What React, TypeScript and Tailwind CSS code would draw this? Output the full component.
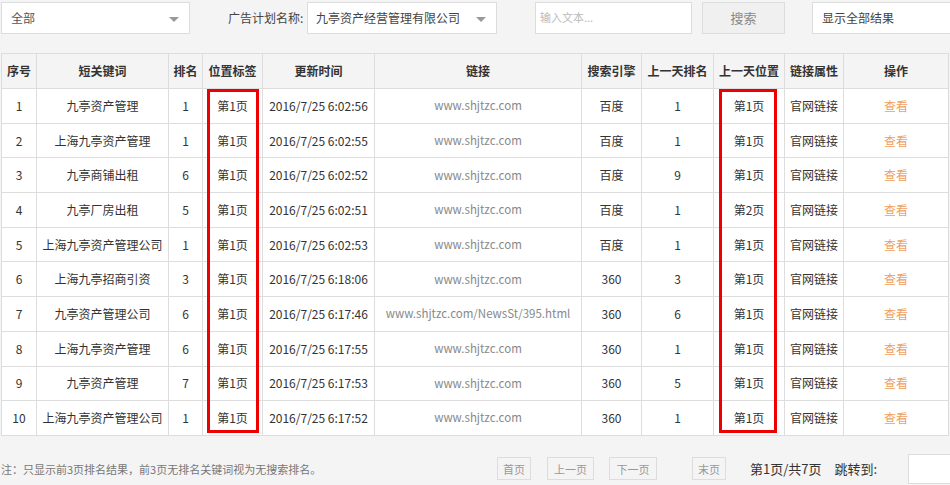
import React from "react";

const rows = [
  ["1","九亭资产管理","1","第1页","2016/7/25 6:02:56","www.shjtzc.com","百度","1","第1页"],
  ["2","上海九亭资产管理","1","第1页","2016/7/25 6:02:55","www.shjtzc.com","百度","1","第1页"],
  ["3","九亭商铺出租","6","第1页","2016/7/25 6:02:52","www.shjtzc.com","百度","9","第1页"],
  ["4","九亭厂房出租","5","第1页","2016/7/25 6:02:51","www.shjtzc.com","百度","1","第2页"],
  ["5","上海九亭资产管理公司","1","第1页","2016/7/25 6:02:53","www.shjtzc.com","百度","1","第1页"],
  ["6","上海九亭招商引资","3","第1页","2016/7/25 6:18:06","www.shjtzc.com","360","3","第1页"],
  ["7","九亭资产管理公司","6","第1页","2016/7/25 6:17:46","www.shjtzc.com/NewsSt/395.html","360","6","第1页"],
  ["8","上海九亭资产管理","6","第1页","2016/7/25 6:17:55","www.shjtzc.com","360","1","第1页"],
  ["9","九亭资产管理","7","第1页","2016/7/25 6:17:53","www.shjtzc.com","360","5","第1页"],
  ["10","上海九亭资产管理公司","1","第1页","2016/7/25 6:17:52","www.shjtzc.com","360","1","第1页"],
];
const widths = [35, 132, 34, 60, 112, 207, 60, 72, 71, 59, 105];
const heads = ["序号","短关键词","排名","位置标签","更新时间","链接","搜索引擎","上一天排名","上一天位置","链接属性","操作"];

const Caret = () => (
  <span className="absolute right-[10px] top-[14px] w-0 h-0 border-l-[5px] border-r-[5px] border-t-[5px] border-l-transparent border-r-transparent border-t-[#999]" />
);

export default function App() {
  return (
    <div className="w-[950px] h-[485px] bg-[#f4f4f4] overflow-hidden relative text-[12px] text-[#333]" style={{ fontFamily: '"Noto Sans CJK SC", "Noto Sans", sans-serif' }}>
      <div className="flex items-center h-[34px] pt-[1px] whitespace-nowrap">
        <div className="relative shrink-0 ml-[1px] w-[189px] h-[32px] bg-white border border-[#ddd] flex items-center pl-[9px] text-[#555]">全部<Caret /></div>
        <div className="shrink-0 ml-[38px] w-[79px] text-[#444]">广告计划名称:</div>
        <div className="relative shrink-0 w-[190px] h-[32px] bg-white border border-[#ddd] flex items-center pl-[8px] text-[#444]">九亭资产经营管理有限公司<Caret /></div>
        <div className="shrink-0 ml-[38px] w-[157px] h-[32px] bg-white border border-[#ddd] flex items-center pl-[4px] text-[#bbb] text-[11px]">输入文本...</div>
        <div className="shrink-0 ml-[10px] w-[83px] h-[32px] bg-[#f0f0f0] border border-[#ddd] flex items-center justify-center text-[#888] text-[13px]">搜索</div>
        <div className="shrink-0 ml-[27px] w-[150px] h-[32px] bg-white border border-[#ddd] flex items-center pl-[9px] text-[#444]">显示全部结果</div>
      </div>
      <table className="mt-[19px] ml-[1px] border-collapse table-fixed bg-white" style={{ width: 947 }}>
        <colgroup>{widths.map((w, i) => <col key={i} style={{ width: w }} />)}</colgroup>
        <thead>
          <tr className="h-[35px] bg-[#f4f4f4]">
            {heads.map((h) => <th key={h} className="border border-[#ddd] font-bold text-[12px] text-[#333]">{h}</th>)}
          </tr>
        </thead>
        <tbody>
          {rows.map((r) => (
            <tr key={r[0]} className="h-[34.7px]">
              {r.map((c, i) => (
                <td key={i} className={`border border-[#ddd] text-center whitespace-nowrap ${i === 5 ? "text-[#888] text-[11.5px]" : ""}`}>{c}</td>
              ))}
              <td className="border border-[#ddd] text-center">官网链接</td>
              <td className="border border-[#ddd] text-center text-[#f0a060]">查看</td>
            </tr>
          ))}
        </tbody>
      </table>
      <div className="absolute left-[207px] top-[89px] w-[52px] h-[344px] border-[3px] border-[#e00]" />
      <div className="absolute left-[719px] top-[89px] w-[58px] h-[344px] border-[3px] border-[#e00]" />
      <div className="flex items-center mt-[21px] h-[24px] whitespace-nowrap">
        <div className="shrink-0 ml-[1px] w-[496px] text-[11px] text-[#777]">注：只显示前3页排名结果，前3页无排名关键词视为无搜索排名。</div>
        {[["首页",34,0],["上一页",47,16],["下一页",48,15],["末页",34,35]].map(([t,w,m]) => (
          <div key={t as string} style={{ width: w as number, marginLeft: m as number }} className="shrink-0 h-[23px] border border-[#ddd] bg-[#f4f4f4] flex items-center justify-center text-[11px] text-[#999]">{t}</div>
        ))}
        <div className="shrink-0 ml-[24px] text-[13px] text-[#333]">第1页/共7页</div>
        <div className="shrink-0 ml-[13px] text-[13px] text-[#333]">跳转到:</div>
        <div className="shrink-0 ml-[31px] w-[47px] h-[30px] bg-white border border-[#ddd]" />
        <div className="shrink-0 ml-[2px] h-[30px] w-[20px] border border-[#ddd] flex items-center pl-[2px] text-[#999]">G</div>
      </div>
    </div>
  );
}
